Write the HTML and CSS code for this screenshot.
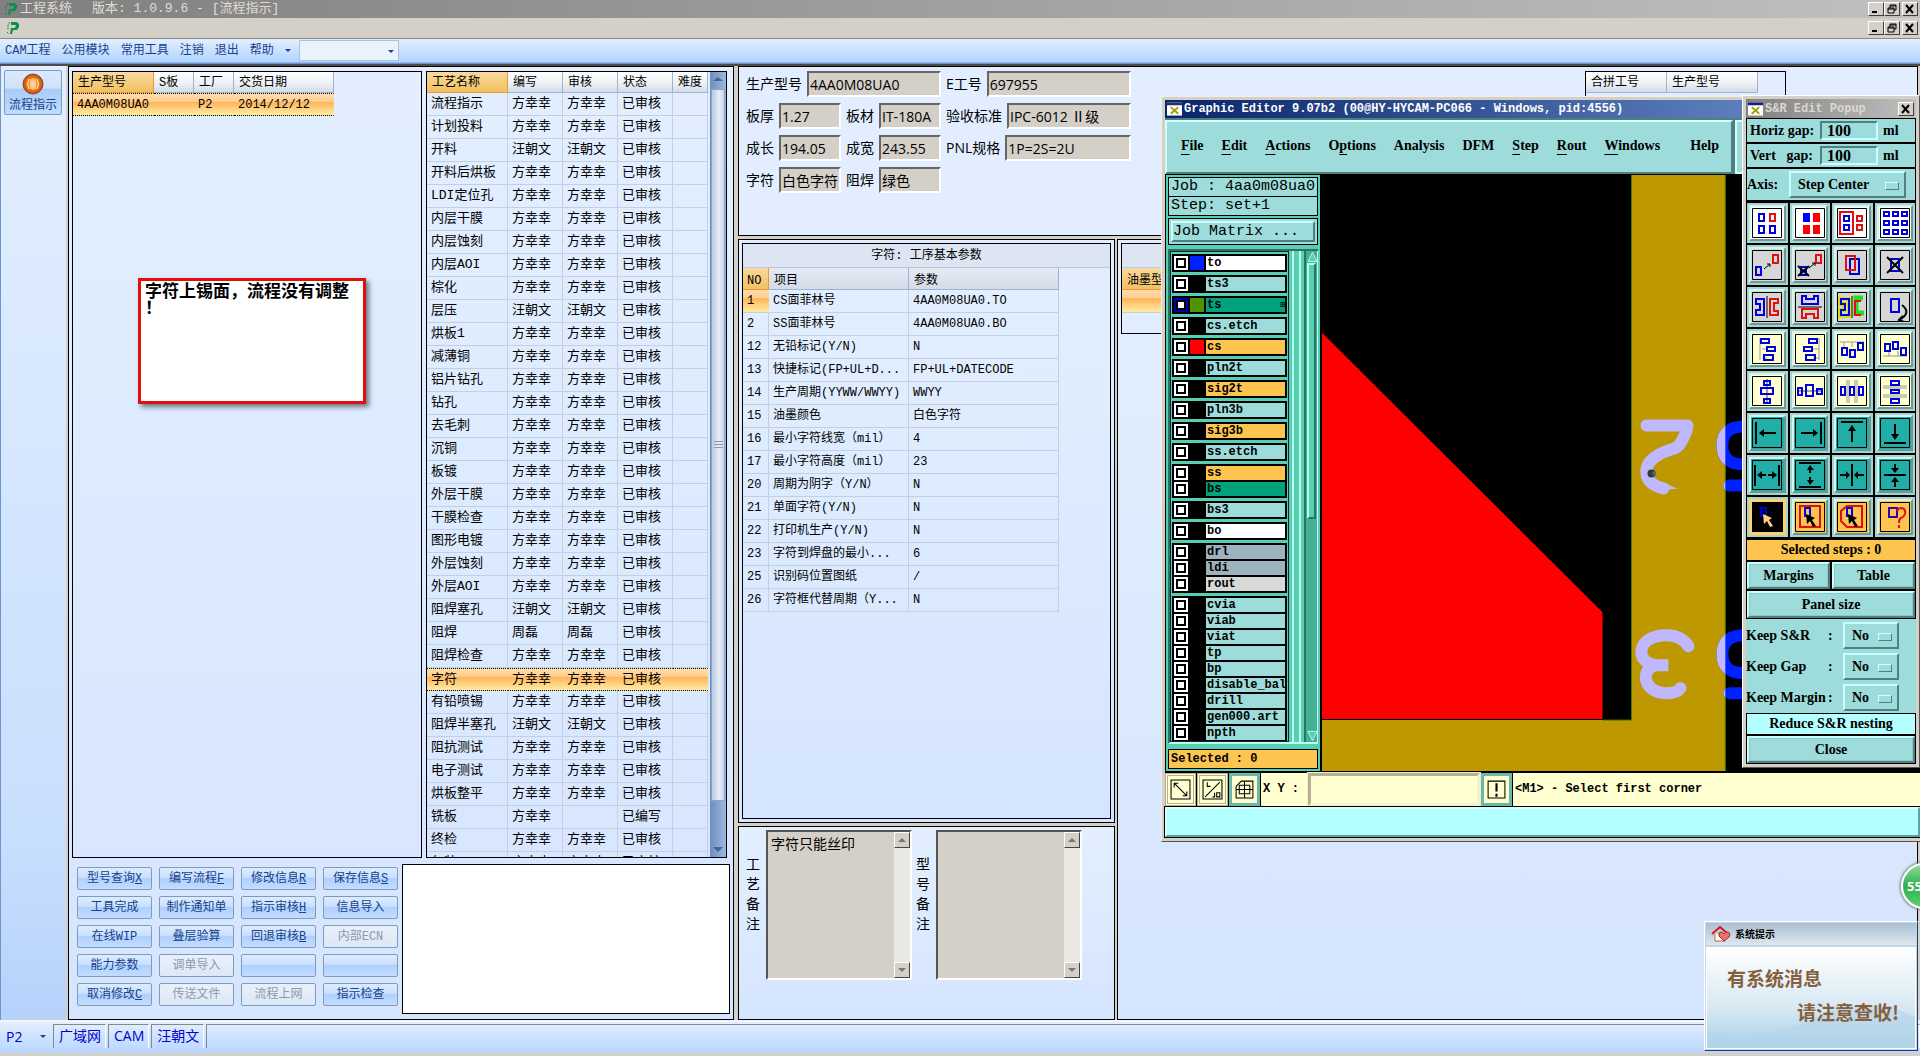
FILE: index.html
```html
<!DOCTYPE html>
<html lang="zh-CN">
<head>
    <meta charset="UTF-8">
    <title>工程系统 - [流程指示]</title>
    <link rel="stylesheet" href="styles.css">
</head>
<body>
    <header class="title-bar">
        <svg class="app-icon" viewBox="0 0 14 14"><path d="M5 1h6l2 2v3l-2 3H7l-1 4H4L5 7h4l1-3H5z" fill="#0a9048"/><path d="M4 1L2 4v5M1 11l2 2" stroke="#157a43" fill="none" stroke-dasharray="2 1"/></svg>
        <span class="title-name">工程系统</span><span>版本: 1.0.9.6 - [流程指示]</span>
        <div class="win-buttons">
            <button aria-label="最小化"><svg viewBox="0 0 12 10"><path d="M2 8h5" stroke="#000" stroke-width="2"/></svg></button>
            <button aria-label="还原"><svg viewBox="0 0 12 10"><path d="M4 4V1h6v5H8M4 2h6M2 4h6v5H2zM2 5h6" fill="none" stroke="#000"/></svg></button>
            <button class="close" aria-label="关闭"><svg viewBox="0 0 12 10"><path d="M2 1l7 8M9 1L2 9" stroke="#000" stroke-width="2"/></svg></button>
        </div>
    </header>
    <div class="mdi-bar">
        <svg class="app-icon" viewBox="0 0 14 14"><path d="M5 1h6l2 2v3l-2 3H7l-1 4H4L5 7h4l1-3H5z" fill="#0a9048"/><path d="M4 1L2 4v5M1 11l2 2" stroke="#157a43" fill="none" stroke-dasharray="2 1"/></svg>
        <div class="win-buttons">
            <button aria-label="最小化子窗口"><svg viewBox="0 0 12 10"><path d="M2 8h5" stroke="#000" stroke-width="2"/></svg></button>
            <button aria-label="还原子窗口"><svg viewBox="0 0 12 10"><path d="M4 4V1h6v5H8M4 2h6M2 4h6v5H2zM2 5h6" fill="none" stroke="#000"/></svg></button>
            <button class="close" aria-label="关闭子窗口"><svg viewBox="0 0 12 10"><path d="M2 1l7 8M9 1L2 9" stroke="#000" stroke-width="2"/></svg></button>
        </div>
    </div>
    <nav class="menu-bar">
        <button>CAM工程</button><button>公用模块</button><button>常用工具</button><button>注销</button><button>退出</button><button>帮助</button>
        <i class="arrow-down"></i>
        <div class="combo"><select aria-label="查找"><option></option></select><i class="arrow-down"></i></div>
    </nav>

    <div class="workspace">
        <aside class="side-bar">
            <button class="side-button">
                <svg viewBox="0 0 24 24"><defs><radialGradient id="ball"><stop offset="0" stop-color="#ffc070"/><stop offset=".6" stop-color="#f47a18"/><stop offset="1" stop-color="#c94800"/></radialGradient></defs><circle cx="12" cy="12" r="10" fill="url(#ball)" stroke="#7a4a38"/><path d="M8 7q-3 5 0 10M12 6v12M16 7q3 5 0 10M10 7v10M14 7v10" fill="none" stroke="#fff0d8"/></svg>
                流程指示
            </button>
        </aside>

        <section class="panel orders">
            <div class="lists">
                <div class="box order-box">
                    <table class="grid order-table">
                        <colgroup><col><col><col><col></colgroup>
                        <thead><tr><th class="hot">生产型号</th><th>S板</th><th>工厂</th><th>交货日期</th></tr></thead>
                        <tbody><tr class="picked"><td>4AA0M08UA0</td><td></td><td>P2</td><td>2014/12/12</td></tr></tbody>
                    </table>
                </div>
                <div class="box step-box">
                    <table class="grid step-table">
                        <colgroup><col><col><col><col><col></colgroup>
                        <thead><tr><th class="hot">工艺名称</th><th>编写</th><th>审核</th><th>状态</th><th>难度</th></tr></thead>
                        <tbody id="steps"></tbody>
                    </table>
                    <div class="blue-scroll">
                        <i class="arrow-up"></i><div class="blue-thumb"><span></span></div><i class="arrow-down"></i>
                    </div>
                </div>
            </div>
            <div class="actions">
                <div class="action-grid">
                    <button>型号查询<u>X</u></button><button>编写流程<u>F</u></button><button>修改信息<u>R</u></button><button>保存信息<u>S</u></button>
                    <button>工具完成</button><button>制作通知单</button><button>指示审核<u>H</u></button><button>信息导入</button>
                    <button>在线WIP</button><button>叠层验算</button><button>回退审核<u>B</u></button><button disabled>内部ECN</button>
                    <button>能力参数</button><button disabled>调单导入</button><button aria-label="备用一"></button><button aria-label="备用二"></button>
                    <button>取消修改<u>C</u></button><button disabled>传送文件</button><button disabled>流程上网</button><button>指示检查</button>
                </div>
                <textarea class="log" aria-label="记录"></textarea>
            </div>
        </section>

        <div class="detail">
            <section class="panel info">
                <form class="info-form">
                    <div class="field-row"><label for="model">生产型号</label><input id="model" class="wide" value="4AA0M08UA0" readonly><label for="eno">E工号</label><input id="eno" class="grow" value="697955" readonly></div>
                    <div class="field-row"><label for="thick">板厚</label><input id="thick" value="1.27" readonly><label for="mat">板材</label><input id="mat" value="IT-180A" readonly><label for="std">验收标准</label><input id="std" class="grow" value="IPC-6012 Ⅱ级" readonly></div>
                    <div class="field-row"><label for="len">成长</label><input id="len" value="194.05" readonly><label for="wid">成宽</label><input id="wid" value="243.55" readonly><label for="pnl">PNL规格</label><input id="pnl" class="grow" value="1P=2S=2U" readonly></div>
                    <div class="field-row"><label for="mark">字符</label><input id="mark" value="白色字符" readonly><label for="mask">阻焊</label><input id="mask" value="绿色" readonly></div>
                </form>
                <div class="box merge-box">
                    <table class="grid merge-table">
                        <colgroup><col><col></colgroup>
                        <thead><tr><th>合拼工号</th><th>生产型号</th></tr></thead>
                    </table>
                </div>
            </section>
            <div class="detail-lower">
                <div class="detail-left">
                    <section class="panel params">
                        <div class="box param-box">
                            <h2>字符: 工序基本参数</h2>
                            <table class="grid param-table">
                                <colgroup><col><col><col></colgroup>
                                <thead><tr><th class="hot">NO</th><th>项目</th><th>参数</th></tr></thead>
                                <tbody id="params"></tbody>
                            </table>
                        </div>
                    </section>
                    <section class="panel remarks">
                        <label for="remark1">工艺备注</label>
                        <div class="memo"><textarea id="remark1" readonly>字符只能丝印</textarea><div class="gray-scroll"><button type="button" aria-label="上"><i class="arrow-up"></i></button><button type="button" aria-label="下"><i class="arrow-down"></i></button></div></div>
                        <label for="remark2">型号备注</label>
                        <div class="memo"><textarea id="remark2" readonly></textarea><div class="gray-scroll"><button type="button" aria-label="上"><i class="arrow-up"></i></button><button type="button" aria-label="下"><i class="arrow-down"></i></button></div></div>
                    </section>
                </div>
                <section class="panel ink">
                    <div class="box ink-box">
                        <h2></h2>
                        <table class="grid ink-table">
                            <thead><tr><th class="hot">油墨型号</th></tr></thead>
                            <tbody><tr class="picked"><td></td></tr></tbody>
                        </table>
                    </div>
                </section>
            </div>
        </div>
    </div>

    <footer class="status-bar">
        <div class="cell plain">P2 <i class="arrow-down"></i></div><div class="cell">广域网</div><div class="cell">CAM</div><div class="cell">汪朝文</div><div class="cell rest"></div>
    </footer>

    <div class="note">字符上锡面，流程没有调整<br>！</div>
    <div class="badge">55</div>

    <!-- Graphic Editor window -->
    <section class="editor">
        <div class="editor-title"><svg viewBox="0 0 16 14"><path d="M0 0h16v14H0z" fill="#fff"/><path d="M0 0h16v3H0z" fill="#203070"/><path d="M4 5l8 7M12 5l-8 7" stroke="#a0a000" stroke-width="2"/></svg>Graphic Editor 9.07b2 (00@HY-HYCAM-PC066 - Windows, pid:4556)</div>
        <div class="editor-menus">
            <nav class="editor-menu">
                <button><u>F</u>ile</button><button><u>E</u>dit</button><button><u>A</u>ctions</button><button>O<u>p</u>tions</button><button>Analysis</button><button>DFM</button><button><u>S</u>tep</button><button><u>R</u>out</button><button><u>W</u>indows</button><button class="help">Help</button>
            </nav>
            <div class="editor-menu-end"></div>
        </div>
        <div class="editor-main">
            <div class="layer-pane">
                <div class="job-line">Job : 4aa0m08ua0</div>
                <div class="job-line">Step: set+1</div>
                <div class="matrix"><button>Job Matrix ...</button></div>
                <div class="layer-area">
                    <div class="layer-list" id="layers"></div>
                    <div class="layer-rail"></div>
                    <div class="green-scroll">
                        <svg viewBox="0 0 12 12"><path d="M6 1l5 10H1z" fill="#58ceb2" stroke="#b8fff0"/></svg>
                        <div class="green-thumb"></div>
                        <svg viewBox="0 0 12 12"><path d="M1 1h10L6 11z" fill="#58ceb2" stroke="#b8fff0"/></svg>
                    </div>
                </div>
                <div class="selected">Selected : 0</div>
            </div>
            <svg class="board" viewBox="1321 175 600 597" preserveAspectRatio="xMinYMin slice">
                <defs>
                    <clipPath id="overlap"><path d="M1632 175h94v597h-94z"/></clipPath>
                    <path id="edge-marks" d="M1750 427h-5q-22 0-22 19t22 19h5M1730 486h20M1750 636h-5q-22 0-22 19t22 19h5M1730 694h20"/>
                </defs>
                <path d="M1321 175h600v597h-600z" fill="#000"/>
                <path d="M1632 175h94v597h-404v-51h310z" fill="#be9800"/>
                <path d="M1603 721h29V175M1726 175v597" fill="none" stroke="#437d00"/>
                <path d="M1322 333l281 280v107h-281z" fill="#f00"/>
                <g fill="none" stroke-width="12" stroke-linecap="round">
                    <path d="M1647 426h41q-1 9-8 19-3 4-9 5-26 9-24 24 1 11 17 15" stroke="#c0b8ff" stroke-linejoin="round"/>
                    <path d="M1689 647c-5-8-14-11-22-11-32 0-32 30-8 30h10-10c-18 0-18 28 8 28q11 0 14-5" stroke="#c0b8ff"/>
                    <use href="#edge-marks" stroke="#0020ff"/>
                    <use href="#edge-marks" stroke="#c0b8ff" clip-path="url(#overlap)"/>
                </g>
                <path d="M1660 491l19-2q-6-1-13-6z" fill="#c0b8ff"/>
                <circle cx="1652" cy="474" r="4" fill="#333d2a"/><path d="M1653 472h3v4h-3z" fill="#3860d0"/>
            </svg>
        </div>
        <div class="editor-tools">
            <button aria-label="zoom window"><svg viewBox="0 0 20 20"><path d="M1 1h18v18H1zM4 4l12 12M4 8V4h4M12 16h4v-4" fill="none" stroke="#000"/></svg></button>
            <button aria-label="snap"><svg viewBox="0 0 20 20"><path d="M1 1h18v18H1zM3 17L17 3M5 3v4h3M10 17h2v-4M14 13h3v4h-3z" fill="none" stroke="#000"/></svg></button>
            <button class="on" aria-label="grid"><svg viewBox="0 0 20 20"><path d="M2 7l5-5h11v16H2zM2 10h16M10 2v16M5 6h10v8H5z" fill="none" stroke="#000"/></svg></button>
            <label for="xy">X Y :</label>
            <input id="xy">
            <button class="on" aria-label="alert"><svg viewBox="0 0 20 20"><path d="M2 2h16v16H2z" fill="none" stroke="#000"/><path d="M10 4v8M10 14v3" stroke="#000" stroke-width="2"/></svg></button>
            <span>&lt;M1&gt; - Select first corner</span>
        </div>
        <div class="editor-command"></div>
    </section>

    <!-- S&R popup -->
    <section class="popup">
        <div class="popup-title"><svg viewBox="0 0 16 14"><path d="M0 0h16v14H0z" fill="#fff"/><path d="M0 0h16v3H0z" fill="#1a1a80"/><path d="M4 5l8 7M12 5l-8 7" stroke="#a0a000" stroke-width="2"/></svg>S&amp;R Edit Popup
            <button aria-label="close popup"><svg viewBox="0 0 12 10"><path d="M2 1l7 8M9 1L2 9" stroke="#000" stroke-width="2"/></svg></button></div>
        <div class="gap-row"><label for="hgap">Horiz gap:</label><input id="hgap" value="100"><span>ml</span></div>
        <div class="gap-row"><label for="vgap">Vert &nbsp; gap:</label><input id="vgap" value="100"><span>ml</span></div>
        <div class="axis-row"><label for="axis">Axis:</label><div class="option"><select id="axis"><option>Step Center</option></select></div></div>
        <div class="icon-grid" id="icons"></div>
        <div class="steps-count">Selected steps : 0</div>
        <div class="pair"><button>Margins</button><button>Table</button></div>
        <div class="pair"><button>Panel size</button></div>
        <div class="keep">
            <div class="keep-row"><label for="k1">Keep S&amp;R</label><span>:</span><div class="option"><select id="k1"><option>No</option></select></div></div>
            <div class="keep-row"><label for="k2">Keep Gap</label><span>:</span><div class="option"><select id="k2"><option>No</option></select></div></div>
            <div class="keep-row"><label for="k3">Keep Margin</label><span>:</span><div class="option"><select id="k3"><option>No</option></select></div></div>
        </div>
        <button class="reduce">Reduce S&amp;R nesting</button>
        <div class="pair"><button>Close</button></div>
    </section>

    <section class="toast">
        <h3><svg viewBox="0 0 20 16"><path d="M4 8v7h10V8" fill="#fff" stroke="#b86a20"/><path d="M1 8l8-7 8 7" fill="none" stroke="#d81818" stroke-width="2"/><path d="M13 15l-5-5q-1-4 2-4 2 0 3 2 1-2 4-2 3 1 1 5z" fill="#f07070" stroke="#a02828"/></svg>系统提示</h3>
        <div class="toast-body">
            <svg viewBox="0 0 210 102" preserveAspectRatio="none"><path d="M0 86q50 14 110-16 50-24 100 0v32H0z" fill="#b4d6ea" opacity=".6"/></svg>
            <p>有系统消息</p><p class="second">请注意查收!</p>
        </div>
    </section>

    <script>
        const F = '方幸幸', W = '汪朝文', Z = '周磊', OK = '已审核';
        const steps = [
            ['流程指示', F], ['计划投料', F], ['开料', W], ['开料后烘板', F], ['LDI定位孔', F], ['内层干膜', F],
            ['内层蚀刻', F], ['内层AOI', F], ['棕化', F], ['层压', W], ['烘板1', F], ['减薄铜', F], ['铝片钻孔', F],
            ['钻孔', F], ['去毛刺', F], ['沉铜', F], ['板镀', F], ['外层干膜', F], ['干膜检查', F], ['图形电镀', F],
            ['外层蚀刻', F], ['外层AOI', F], ['阻焊塞孔', W], ['阻焊', Z], ['阻焊检查', F], ['字符', F], ['有铅喷锡', F],
            ['阻焊半塞孔', W], ['阻抗测试', F], ['电子测试', F], ['烘板整平', F], ['铣板', F, '', '已编写'], ['终检', F], ['包装', F]
        ];
        document.getElementById('steps').innerHTML = steps.map(([name, by, check = by, state = OK]) =>
            `<tr class="${name === '字符' ? 'picked' : ''}"><td>${name}</td><td>${by}</td><td>${check}</td><td>${state}</td><td></td></tr>`
        ).join('');

        const params = [
            [1, 'CS面菲林号', '4AA0M08UA0.TO'], [2, 'SS面菲林号', '4AA0M08UA0.BO'], [12, '无铅标记(Y/N)', 'N'],
            [13, '快捷标记(FP+UL+D...', 'FP+UL+DATECODE'], [14, '生产周期(YYWW/WWYY)', 'WWYY'], [15, '油墨颜色', '白色字符'],
            [16, '最小字符线宽（mil）', '4'], [17, '最小字符高度（mil）', '23'], [20, '周期为阴字（Y/N）', 'N'],
            [21, '单面字符(Y/N)', 'N'], [22, '打印机生产(Y/N)', 'N'], [23, '字符到焊盘的最小...', '6'],
            [25, '识别码位置图纸', '/'], [26, '字符框代替周期（Y...', 'N']
        ];
        document.getElementById('params').innerHTML = params.map(([no, item, value], i) =>
            `<tr><td class="${i === 0 ? 'lit' : ''}">${no}</td><td>${item}</td><td>${value}</td></tr>`
        ).join('');

        // every inner list is one framed group of layers: [name, kind, swatch]
        const groups = [
            [['to', 'white', 'blue']], [['ts3']], [['ts', 'green active', 'olive']], [['cs.etch']], [['cs', 'amber', 'red']],
            [['pln2t']], [['sig2t', 'amber']], [['pln3b']], [['sig3b', 'amber']], [['ss.etch']],
            [['ss', 'amber'], ['bs', 'green']], [['bs3']], [['bo', 'white']],
            [['drl', 'slate'], ['ldi', 'slate'], ['rout', 'pale']],
            [['cvia'], ['viab'], ['viat'], ['tp'], ['bp'], ['disable_bala'], ['drill'], ['gen000.art'], ['npth'], ['']]
        ];
        document.getElementById('layers').innerHTML = groups.map(group =>
            `<div class="layer-group">${group.map(([name, kind = '', swatch = '']) =>
                `<label class="layer ${kind}"><input type="checkbox"><i class="${swatch}"></i><span>${name}</span></label>`
            ).join('')}</div>`
        ).join('');

        // shorthands for the 30x30 tool icons
        const r = (x, y, w, h, c = '#00d') => `<rect x="${x}" y="${y}" width="${w}" height="${h}" fill="none" stroke="${c}" stroke-width="2"/>`;
        const p = (d, c = '#000', w = 2) => `<path d="${d}" fill="none" stroke="${c}" stroke-width="${w}"/>`;
        const f = (d, c = '#000') => `<path d="${d}" fill="${c}"/>`;
        const R = '#e01010', G = '#999';
        const cursor = c => f('M11 12l9 4-3 2 4 6-3 1-3-6-3 3z', c);
        const left = 'M7 15l5-4v3h12v2H12v3z', right = 'M23 15l-5-4v3H6v2h12v3z';
        const icons = [
            ['white', r(7, 6, 5, 7) + r(18, 6, 5, 7, R) + r(7, 18, 5, 7) + r(18, 18, 5, 7)],
            ['white', f('M8 5h7v9H8z', '#00f') + f('M18 5h7v9h-7zM8 17h7v9H8zM18 17h7v9h-7z', '#f00')],
            ['white', r(3, 4, 13, 22, R) + r(7, 8, 5, 5) + r(7, 17, 5, 5) + r(20, 8, 5, 5, R) + r(20, 17, 5, 5, R)],
            ['white', [4, 13, 22].map(y => [4, 13, 22].map(x => r(x, y, 5, 4)).join('')).join('')],
            ['gray', r(4, 17, 5, 8) + r(21, 5, 5, 8, R) + p('M12 19l6-5M15 14h3v3', '#000', 1)],
            ['gray', r(6, 17, 5, 8) + r(21, 5, 5, 8, R) + p('M3 16l11 10M14 16L3 26') + p('M14 18l6-5M17 13h3v3', '#000', 1)],
            ['gray', r(13, 9, 9, 15) + r(9, 6, 9, 14, R)],
            ['gray', r(11, 9, 8, 12) + p('M7 7l16 16M23 7L7 23')],
            ['gray', p('M4 7h8v16H4v-5h4v-6H4z', '#00d') + p('M26 7h-8v16h8v-4h-4v-8h4z', R) + p('M15 4v22', '#000', 1)],
            ['gray', p('M7 4h4v3h8V4h4v8H7z', '#00d') + p('M7 26h4v-4h8v4h4v-9H7z', R) + p('M3 15h24', '#000', 1)],
            ['gray', p('M3 7h9v17H3v-6h4v-6H3z', '#dd0', 4) + p('M4 7h8v16H4v-5h4v-6H4z', '#00d') + p('M26 6h-7v15h8', '#2d2', 5) + p('M24 9h-6v14h6', R) + p('M15 4v22', '#000', 1)],
            ['gray', r(11, 7, 8, 13) + p('M22 13q10 8-3 15M23 24l-4 4 5 2')],
            ['cream', p('M8 4v22M10 15h5M10 24h5', G, 1) + r(9, 5, 8, 4) + r(15, 13, 8, 4) + r(12, 21, 9, 5)],
            ['cream', p('M24 4v22M18 15h6M18 24h6', G, 1) + r(14, 5, 8, 4) + r(9, 13, 8, 4) + r(11, 21, 9, 5)],
            ['cream', p('M3 8h24M7 8v5M15 8v5', G, 1) + r(5, 14, 5, 7) + r(13, 16, 5, 7) + r(21, 9, 5, 7)],
            ['cream', p('M3 22h24M9 17v5M18 17v5', G, 1) + r(5, 10, 5, 7) + r(13, 8, 5, 7) + r(21, 14, 5, 7)],
            ['cream', p('M15 3v24', '#448', 1) + r(12, 5, 6, 4) + r(9, 12, 12, 6) + r(12, 23, 6, 4)],
            ['cream', p('M3 15h24', '#448', 1) + r(3, 12, 4, 7) + r(11, 9, 7, 11) + r(22, 13, 5, 5)],
            ['cream', p('M10 4v23M12 4v23M18 4v23M20 4v23', G, 1) + r(4, 11, 4, 8) + r(13, 11, 4, 8) + r(22, 11, 4, 8)],
            ['cream', p('M3 10h24M3 12h24M3 19h24M3 21h24', G, 1) + r(11, 5, 8, 4) + r(11, 14, 8, 3) + r(11, 23, 8, 4)],
            ['teal', p('M4 4v22') + f(left)],
            ['teal', p('M26 4v22') + f(right)],
            ['teal', p('M4 4h22') + f('M15 7l-4 6h3v11h2V13h3z')],
            ['teal', p('M4 25h22') + f('M15 22l-4-6h3V6h2v10h3z')],
            ['teal', p('M3 5v21M27 5v21') + f('M5 15l5-4v3h4v2h-4v3zM25 15l-5-4v3h-4v2h4v3z')],
            ['teal', p('M4 3h22M4 27h22') + f('M15 5l-3 5h2v3h2v-3h3zM15 25l-3-5h2v-3h2v3h3z')],
            ['teal', p('M15 4v22') + f('M13 15l-4-4v3H3v2h6v3zM17 15l4-4v3h6v2h-6v3z')],
            ['teal', p('M4 15h22') + f('M15 13l-4-5h3V4h2v4h3zM15 17l-4 5h3v5h2v-5h3z')],
            ['black', r(9, 6, 5, 8) + cursor('#ffd080')],
            ['amber', r(5, 4, 20, 21, R) + r(10, 6, 5, 8) + cursor('#000')],
            ['amber', p('M4 9l6-5h15v21H10l-6-6z', R) + r(10, 6, 5, 8) + cursor('#000')],
            ['amber', r(9, 6, 8, 9, '#30a') + p('M17 9q1-3 5-3 4 1 3 6-1 3-4 4-2 1-2 5M19 23v3', R)]
        ];
        document.getElementById('icons').innerHTML = icons.map(([kind, art], i) =>
            `<div class="icon-cell"><button class="${kind}" aria-label="tool ${i + 1}"><svg viewBox="0 0 30 30"><path d="M.5.5h29v29H.5z" fill="none" stroke="#000"/>${art}</svg></button></div>`
        ).join('');
    </script>
</body>
</html>
```

FILE: styles.css
```css
:root {
    --song: "Liberation Mono", "Noto Sans CJK SC", monospace;
    --sans: "Open Sans", "Noto Sans CJK SC", sans-serif;
    --serif: "Liberation Serif", serif;
    --beige: #d4d0c8;
    --aqua: #9ddcda;
    --green: #58ceb2;
    --amber: #fdc54f;
    --cream: #ffffd0;
}
* {
    box-sizing: border-box;
}
body {
    margin: 0;
    height: 100vh;
    display: flex;
    flex-direction: column;
    position: relative;
    overflow: hidden;
    background: var(--beige);
    font: 12px/16px var(--song);
    color: #000;
}
button, input, select, textarea {
    font: inherit;
    color: inherit;
    margin: 0;
    padding: 0;
    border-radius: 0;
}
button, select {
    appearance: none;
    border: 0;
    background: none;
    white-space: nowrap;
}
i.arrow-down, i.arrow-up {
    width: 0;
    height: 0;
    border: 3px solid transparent;
    border-bottom-width: 0;
    border-top-color: #15428b;
}
i.arrow-up {
    border-width: 0 3px 4px;
    border-bottom-color: #777;
}

/* title and menu */
.title-bar, .mdi-bar {
    flex: none;
    display: flex;
    align-items: center;
    height: 18px;
    padding: 0 2px 0 4px;
    background: linear-gradient(90deg, #808080, #c0c0c0);
    color: #e0dcd4;
    font-size: 13px;
}
.mdi-bar {
    height: 20px;
    padding-left: 6px;
    background: var(--beige);
}
.title-name {
    margin-right: 20px;
}
.app-icon {
    width: 14px;
    height: 14px;
    margin-right: 2px;
}
.win-buttons {
    display: flex;
    margin-left: auto;
}
.win-buttons button, .popup-title button {
    display: flex;
    justify-content: center;
    align-items: center;
    width: 16px;
    height: 14px;
    background: var(--beige);
    border: 1px solid;
    border-color: #fff #404040 #404040 #fff;
}
.win-buttons .close {
    margin-left: 2px;
}
.win-buttons svg, .popup-title button svg {
    width: 12px;
    height: 10px;
}
.menu-bar {
    flex: none;
    display: flex;
    align-items: center;
    gap: 11px;
    height: 28px;
    padding: 1px 5px 3px;
    border-top: 1px solid #8a8a8a;
    border-bottom: 2px solid #4c4c4c;
    background: linear-gradient(#e3efff, #b1d3ff 23px, #6f96cc 24px);
    color: #15428b;
}
.combo {
    position: relative;
    display: flex;
    width: 100px;
    height: 21px;
    margin-left: -3px;
    border: 1px solid #abc1de;
    background: #eaf2fb;
}
.combo select {
    width: 100%;
}
.combo i {
    position: absolute;
    right: 4px;
    top: 9px;
}

/* workspace */
.workspace {
    flex: 1;
    display: flex;
    min-height: 0;
    padding-right: 2px;
}
.side-bar {
    width: 66px;
    margin-right: 2px;
    padding: 4px 3px;
    border-left: 1px solid #6f96cc;
    background: linear-gradient(#e3efff, #c9dffe 80%, #b6d2fb);
}
.side-button {
    display: flex;
    flex-direction: column;
    align-items: center;
    width: 58px;
    height: 45px;
    padding-top: 1px;
    border: 1px solid #7d9cc8;
    border-radius: 2px;
    background: linear-gradient(#dbe9fc, #cfe2fc 40%, #a9ccf8 42%, #c0dbff);
    color: #15428b;
}
.side-button svg {
    width: 24px;
    height: 24px;
    margin-bottom: 2px;
}
.panel {
    border: 1px solid #000;
    background: linear-gradient(#e3efff, #dcebfe 45%, #d6e5ff);
}
.box {
    border: 1px solid #000;
    overflow: hidden;
}
.orders {
    flex: none;
    display: flex;
    flex-direction: column;
    gap: 6px;
    width: 666px;
    padding: 4px 3px 5px;
}
.lists {
    flex: 1;
    min-height: 0;
    display: flex;
    gap: 4px;
}
.order-box {
    flex: 1;
}
.step-box {
    display: flex;
    justify-content: space-between;
    width: 301px;
    margin-right: 3px;
}

/* grids */
.grid {
    table-layout: fixed;
    border-collapse: separate;
    border-spacing: 0;
    flex: none;
    align-self: flex-start;
}
.grid th {
    height: 21px;
    padding: 1px 5px 0;
    border-right: 1px solid #9db3cf;
    border-bottom: 1px solid #9db3cf;
    background: linear-gradient(#fff, #eceff4 60%, #d3dbe9);
    font-weight: normal;
    text-align: left;
    white-space: nowrap;
}
.grid th.hot {
    border-color: #f29536;
    background: linear-gradient(#f9d99f, #f1c15f);
}
.grid td {
    height: 23px;
    padding: 0 0 0 4px;
    border-right: 1px solid #c3d0e2;
    border-bottom: 1px solid #c3d0e2;
    white-space: nowrap;
    overflow: hidden;
}
.grid .picked td, .grid td.lit {
    border-right-color: transparent;
    border-top: 1px dotted #000;
    border-bottom: 1px dotted #000;
    background: linear-gradient(#ffdcae, #ffce90 35%, #ffb456 40%, #ffd183 70%, #ffec9c);
}
.grid td.lit, .ink-table .picked td {
    border-top: 0;
    border-bottom: 1px solid #c3d0e2;
}
.order-table col:nth-child(1) { width: 81px; }
.order-table col:nth-child(2) { width: 40px; }
.order-table col:nth-child(3) { width: 40px; }
.order-table col:nth-child(4) { width: 100px; }
.order-table { width: 261px; }
.step-table { width: 281px; }
.step-table td { font-size: 13px; }
.step-table col { width: 55px; }
.step-table col:first-child { width: 81px; }
.step-table col:last-child { width: 35px; }
.param-table { width: 316px; }
.param-table col:nth-child(1) { width: 26px; }
.param-table col:nth-child(2) { width: 140px; }
.param-table col:nth-child(3) { width: 150px; }
.param-table th, .ink-table th {
    height: 22px;
    padding-top: 4px;
    background: linear-gradient(#e4ebf5, #d3dbe9);
}
.param-table th.hot {
    padding: 4px 4px 0;
}
.blue-scroll {
    display: flex;
    flex-direction: column;
    align-items: center;
    justify-content: space-between;
    width: 16px;
    padding: 5px 0;
    background: linear-gradient(90deg, #6d8fc0, #9db8dc);
}
.blue-scroll .arrow-down, .blue-scroll .arrow-up {
    border-left-width: 5px;
    border-right-width: 5px;
    border-top-color: #4a6690;
    border-bottom-color: #4a6690;
}
.blue-scroll .arrow-down {
    border-top-width: 5px;
}
.blue-thumb {
    flex: 1;
    display: flex;
    align-items: center;
    justify-content: center;
    width: 14px;
    margin: 8px 0 46px;
    border: 1px solid #8aa3c8;
    background: linear-gradient(90deg, #b8cbe4, #e8edf5 60%, #c8d6ea);
}
.blue-thumb span {
    width: 9px;
    height: 9px;
    background: repeating-linear-gradient(#999 0 1px, transparent 1px 3px);
}

/* action buttons */
.actions {
    flex: none;
    display: flex;
    gap: 4px;
    height: 150px;
}
.action-grid {
    display: grid;
    grid-template-columns: repeat(4, 75px);
    grid-auto-rows: 23px;
    gap: 6px 7px;
    padding: 3px 0 0 5px;
}
.action-grid button {
    border: 1px solid #7f9db9;
    border-radius: 2px;
    background: linear-gradient(#dcebff, #cbe0ff 45%, #aed0ff 48%, #c3dcff);
    color: #15428b;
}
.action-grid button:disabled {
    background: linear-gradient(#e8f0fa, #dde8f6);
    color: #8d9aab;
}
.log {
    flex: 1;
    border: 1px solid #000;
    background: #fff;
    resize: none;
}

/* details */
.detail {
    flex: 1;
    min-width: 0;
    display: flex;
    flex-direction: column;
    gap: 3px;
    margin-left: 4px;
}
.info {
    display: flex;
    height: 170px;
    padding: 4px 7px;
    background: #e2eeff;
}
.info-form {
    display: flex;
    flex-direction: column;
    gap: 6px;
    width: 385px;
}
.field-row {
    display: flex;
    align-items: center;
    gap: 5px;
    height: 26px;
    font: 14px/20px var(--sans);
    white-space: nowrap;
}
.field-row input {
    width: 62px;
    height: 26px;
    padding: 0 1px;
    border: 2px solid;
    border-color: #666 #fff #fff #666;
    background: var(--beige);
}
.field-row .wide {
    width: 134px;
}
.field-row .grow {
    flex: 1;
    min-width: 0;
}
.merge-box {
    width: 201px;
    margin: 0 124px 0 auto;
}
.merge-table { width: 172px; }
.merge-table col:first-child { width: 81px; }
.detail-lower {
    flex: 1;
    min-height: 0;
    display: flex;
    gap: 2px;
}
.detail-left {
    display: flex;
    flex-direction: column;
    gap: 3px;
    width: 377px;
}
.params {
    flex: 1;
    display: flex;
    padding: 3px;
}
.param-box {
    flex: 1;
}
.param-box h2, .ink-box h2 {
    height: 24px;
    margin: 0;
    border-bottom: 1px solid #b8c8de;
    background: #dde5f2;
    font: 12px/24px var(--song);
    text-align: center;
}
.ink {
    flex: 1;
    padding: 3px;
}
.ink-box {
    height: 91px;
}
.ink-table {
    width: 100%;
}
.remarks {
    display: flex;
    gap: 4px;
    height: 194px;
    padding: 3px 7px;
    font: 14px/20px var(--sans);
}
.remarks label {
    width: 16px;
    padding-top: 24px;
    word-break: break-all;
}
.memo {
    display: flex;
    width: 146px;
    height: 150px;
    border: 2px solid;
    border-color: #555 #fff #fff #555;
    background: var(--beige);
}
.memo textarea {
    flex: 1;
    min-width: 0;
    padding: 2px 3px;
    border: 0;
    background: none;
    resize: none;
}
.gray-scroll {
    display: flex;
    flex-direction: column;
    justify-content: space-between;
    width: 16px;
    background: #eae8e3;
}
.gray-scroll button {
    display: flex;
    align-items: center;
    justify-content: center;
    height: 16px;
    background: var(--beige);
    border: 1px solid;
    border-color: #fff #444 #444 #fff;
}
.gray-scroll .arrow-down {
    border-top-color: #777;
    border-width: 4px 4px 0;
}
.gray-scroll .arrow-up {
    border-width: 0 4px 4px;
}

.status-bar {
    flex: none;
    display: flex;
    height: 36px;
    padding: 2px 0 5px;
    border-top: 2px solid #f4f4f4;
    border-bottom: 3px solid var(--beige);
    background: linear-gradient(#e3efff, #b8d5ff);
    font: 14px/22px var(--sans);
    color: #00c;
}
.status-bar .cell {
    height: 24px;
    margin-right: 2px;
    padding: 0 4px 0 5px;
    border-left: 1px solid #888;
    border-top: 1px solid #888;
    border-right: 1px solid #fff;
}
.status-bar .plain {
    display: flex;
    align-items: center;
    justify-content: space-between;
    width: 51px;
    border-color: transparent;
}
.status-bar .rest {
    flex: 1;
    margin: 0;
}

/* overlays */
.note {
    position: absolute;
    left: 138px;
    top: 278px;
    width: 228px;
    height: 126px;
    padding: 3px 4px;
    border: 3px solid #e01010;
    background: #fff;
    box-shadow: 3px 3px 5px rgba(0, 0, 0, 0.5);
    font: bold 17px/17px var(--song);
    white-space: nowrap;
}
.badge {
    position: absolute;
    right: -27px;
    top: 863px;
    width: 46px;
    height: 46px;
    padding-left: 4px;
    border: 2px solid #fff;
    border-radius: 50%;
    background: linear-gradient(#8edc9a, #2fae50 50%, #5fd06c);
    box-shadow: 0 0 3px 1px #777;
    color: #fff;
    font: bold 13px/42px var(--sans);
}

/* Graphic Editor */
.editor {
    position: absolute;
    left: 1161px;
    right: 0;
    top: 96px;
    padding: 3px 0 4px 3px;
    border: 1px solid #eee;
    border-right: 0;
    border-bottom-color: #555;
    background: var(--beige);
    font-weight: bold;
}
.editor-title, .popup-title {
    display: flex;
    align-items: center;
    height: 18px;
    padding-left: 2px;
    background: linear-gradient(90deg, #0a246a, #5b7dba 75%);
    color: #fff;
    white-space: nowrap;
}
.editor-title svg, .popup-title > svg {
    flex: none;
    width: 15px;
    height: 14px;
    margin-right: 2px;
}
.editor-menus {
    display: flex;
    gap: 2px;
    height: 56px;
    padding-top: 2px;
    background: #4f7f7f;
}
.editor-menu {
    display: flex;
    align-items: center;
    gap: 18px;
    width: 568px;
    padding: 0 12px 2px 14px;
    border: 2px solid;
    border-color: #d0ffff #4f7f7f #4f7f7f #d0ffff;
    background: var(--aqua);
    font: bold 14px/18px var(--serif);
}
.editor-menu .help {
    margin-left: auto;
}
.editor-menu u {
    text-underline-offset: 4px;
}
.editor-menu-end {
    flex: 1;
    border: 2px solid #d0ffff;
    background: var(--aqua);
}
.editor-main {
    display: flex;
    height: 598px;
    border-top: 1px solid #000;
    border-bottom: 1px solid #000;
    background: #000;
}
.layer-pane {
    display: flex;
    flex-direction: column;
    flex: none;
    width: 155px;
    padding: 2px;
    border-left: 1px solid #000;
    background: var(--green);
}
.job-line, .matrix, .selected {
    flex: none;
    height: 20px;
    margin-bottom: -1px;
    padding-left: 2px;
    border: 1px solid #000;
    background: var(--aqua);
    font: 15px/18px var(--song);
}
.matrix {
    height: 27px;
    margin: 3px 0 4px;
    padding: 2px;
}
.matrix button, .pair button, .option {
    width: 100%;
    height: 21px;
    border: 2px solid;
    border-color: #c8ffff #4f8080 #4f8080 #c8ffff;
    background: var(--aqua);
    text-align: left;
    line-height: 17px;
}
.layer-area {
    flex: 1;
    min-height: 0;
    display: flex;
    gap: 3px;
    margin-bottom: 5px;
    border-top: 2px solid #2a7562;
    border-left: 2px solid #2a7562;
    border-bottom: 2px solid #b8fff0;
}
.layer-list {
    width: 119px;
    border: 1px solid #123;
    overflow: hidden;
}
.layer-group {
    display: flex;
    flex-direction: column;
    gap: 2px;
    margin: 2px 1px 3px;
    padding: 2px;
    background: #000;
}
.layer-group + .layer-group {
    margin-top: 0;
}
.layer {
    display: flex;
    gap: 2px;
    height: 14px;
    font-size: 12px;
    line-height: 14px;
}
.layer input {
    appearance: none;
    flex: none;
    width: 14px;
    height: 14px;
    border: 2px solid #fff;
    outline: 2px solid #000;
    outline-offset: -4px;
    background: #fff;
}
.layer i {
    flex: none;
    width: 14px;
}
.layer .blue { background: #0020ff; }
.layer .olive { background: #4b9600; }
.layer .red { background: #f00; }
.layer span {
    flex: 1;
    min-width: 0;
    padding-left: 1px;
    background: var(--aqua);
    overflow: hidden;
}
.layer.white span { background: #fff; }
.layer.green span { background: #00a37c; }
.layer.amber span { background: var(--amber); }
.layer.slate span { background: #9db2bd; }
.layer.pale span { background: #d8d8d8; }
.layer.active input {
    border-color: #0000b0;
}
.layer.active span::after {
    content: "⊞";
    float: right;
    font-size: 8px;
}
.layer-rail {
    width: 9px;
    border: solid #b8fff0;
    border-width: 0 2px;
}
.green-scroll {
    display: flex;
    flex-direction: column;
    width: 14px;
    padding: 0 1px;
    border-left: 2px solid #2a7562;
    border-right: 1px solid #b8fff0;
    background: #45b096;
}
.green-scroll svg {
    flex: none;
    width: 11px;
    height: 12px;
}
.green-scroll svg:last-child {
    margin-top: auto;
}
.green-thumb {
    height: 256px;
    border: 2px solid;
    border-color: #b8fff0 #2a7562 #2a7562 #b8fff0;
    background: var(--green);
}
.selected {
    margin: 0;
    background: var(--amber);
    font: bold 12px/18px var(--song);
}
.board {
    flex: 1;
    min-width: 0;
    height: 100%;
    margin-left: 1px;
}
.editor-tools {
    display: flex;
    height: 34px;
    background: #000;
    gap: 1px;
    padding-top: 1px;
}
.editor-tools button {
    display: flex;
    align-items: center;
    justify-content: center;
    width: 31px;
    border: 3px double #b8b090;
    background: var(--cream);
}
.editor-tools .on {
    border: 3px solid #6cb8a8;
}
.editor-tools svg {
    width: 21px;
    height: 21px;
}
.editor-tools label, .editor-tools span {
    width: 46px;
    padding-left: 2px;
    background: var(--cream);
    line-height: 32px;
}
.editor-tools span {
    flex: 1;
}
.editor-tools input {
    width: 172px;
    border: 3px solid;
    border-color: #b8b090 #f4f0d0 #f4f0d0 #b8b090;
    outline: 1px solid #eeeecc;
    background: var(--cream);
}
.editor-command {
    height: 30px;
    margin-top: 1px;
    border: 2px solid;
    border-color: #d8ffff #60a0a0 #60a0a0 #d8ffff;
    outline: 1px solid #000;
    background: #b3ffff;
}

/* S&R popup */
.popup {
    position: absolute;
    right: 0;
    top: 95px;
    width: 178px;
    padding: 3px 2px 3px 3px;
    border: 1px solid;
    border-color: #fff #555 #555 #fff;
    background: var(--beige);
    font: bold 14px/18px var(--serif);
}
.popup > div, .reduce {
    margin-right: 1px;
}
.popup-title {
    height: 19px;
    background: linear-gradient(90deg, #808080, #c0c0c0);
    color: #dcd8d0;
    font: bold 12px/16px var(--song);
}
.popup-title button {
    margin: 0 2px 0 auto;
}
.gap-row, .axis-row {
    display: flex;
    align-items: center;
    height: 25px;
    padding-left: 3px;
    border: 1px solid #000;
    background: var(--aqua);
    white-space: nowrap;
}
.gap-row label {
    width: 70px;
}
.gap-row input {
    width: 58px;
    height: 19px;
    margin-right: 5px;
    padding-left: 5px;
    border: 2px solid;
    border-color: #4f8080 #c8ffff #c8ffff #4f8080;
    background: var(--aqua);
    font-size: 16px;
}
.axis-row {
    height: 33px;
    padding-left: 0;
}
.axis-row label {
    width: 42px;
}
.option {
    position: relative;
    width: 56px;
    height: 27px;
}
.option select {
    width: 100%;
    height: 100%;
    padding-left: 7px;
}
.option::after {
    content: "";
    position: absolute;
    right: 5px;
    top: 9px;
    width: 12px;
    height: 6px;
    border: 1px solid;
    border-color: #d8ffff #4f8080 #4f8080 #d8ffff;
}
.axis-row .option {
    width: 117px;
}
.icon-grid {
    display: grid;
    grid-template-columns: repeat(4, 1fr);
    grid-auto-rows: 40px;
    gap: 2px;
    padding: 2px 1px;
    background: #000;
}
.icon-cell {
    padding: 2px;
    background: #a4d4d0;
}
.icon-cell button {
    display: flex;
    align-items: center;
    justify-content: center;
    width: 100%;
    height: 36px;
    border: 2px solid;
    border-color: #d4f4f0 #6c9898 #6c9898 #d4f4f0;
}
.icon-cell svg {
    width: 30px;
    height: 30px;
}
.icon-cell .white { background: #fff; }
.icon-cell .gray { background: #d6d6d6; }
.icon-cell .cream { background: var(--cream); }
.icon-cell .teal { background: #20aea6; }
.icon-cell .amber { background: var(--amber); }
.icon-cell .black {
    border: 3px solid #ffd070;
    background: #000;
}
.steps-count, .reduce {
    height: 22px;
    border: 1px solid #000;
    background: var(--amber);
    line-height: 20px;
    text-align: center;
}
.pair {
    display: flex;
    height: 29px;
    border: 1px solid #000;
    background: #000;
    gap: 2px;
}
.pair button {
    height: 27px;
    text-align: center;
    box-shadow: inset 0 0 0 1px #8cc8c8;
}
.keep {
    display: flex;
    flex-direction: column;
    gap: 4px;
    padding: 3px 0 2px;
    background: var(--aqua);
}
.keep-row {
    display: flex;
    align-items: center;
    height: 27px;
    white-space: nowrap;
}
.keep-row label {
    width: 82px;
}
.keep-row span {
    width: 15px;
}
.reduce {
    display: block;
    width: 170px;
    background: #b3ffff;
}

/* message toast */
.toast {
    position: absolute;
    right: 2px;
    bottom: 5px;
    width: 214px;
    height: 130px;
    padding: 1px;
    border: 1px solid;
    border-color: #fff #1f3f68 #1f3f68 #fff;
    background: #c4d6e4;
}
.toast h3 {
    display: flex;
    align-items: center;
    gap: 4px;
    height: 22px;
    margin: 0 0 2px;
    padding-left: 5px;
    background: linear-gradient(#a9c0d2, #dde7ee);
    font: bold 10px/16px var(--sans);
}
.toast h3 svg {
    width: 20px;
    height: 16px;
}
.toast-body {
    position: relative;
    height: 102px;
    padding: 20px;
    border: 1px solid #fff;
    background: linear-gradient(#fff, #d7e8f3 60%, #a9cfe6);
    color: #85603c;
    font: bold 19px/20px "Noto Sans CJK SC", sans-serif;
}
.toast-body svg {
    position: absolute;
    inset: 0;
    width: 100%;
    height: 100%;
}
.toast-body p {
    position: relative;
    margin: 0 0 14px;
    white-space: nowrap;
}
.toast-body .second {
    text-align: right;
    margin-right: -4px;
}
```
